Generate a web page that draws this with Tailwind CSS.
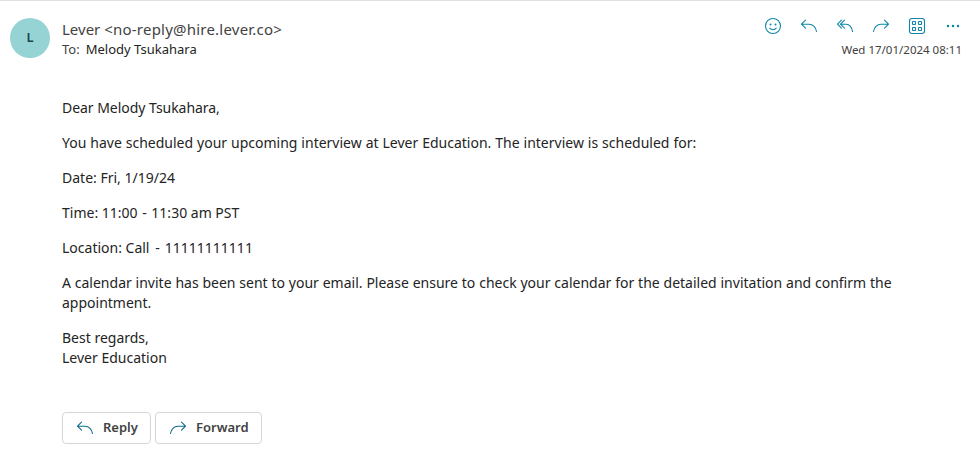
<!DOCTYPE html>
<html lang="en">
<head>
    <meta charset="UTF-8">
    <meta name="viewport" content="width=device-width, initial-scale=1.0">
    <title>Interview scheduled</title>
    <script src="https://cdn.jsdelivr.net/npm/@tailwindcss/browser@4"></script>
</head>
<body class="bg-white font-['Noto_Sans',sans-serif] text-[#242424]">
    <div class="h-[455px] overflow-hidden border-t border-[#e0e0e0]">
        <!-- Message header -->
        <header class="flex pl-[10px] pr-[18px] pt-[17px]">
            <div class="w-10 h-10 shrink-0 rounded-full bg-[#96d3d4] text-[#15474b] text-[13px] font-semibold flex items-center justify-center">L</div>
            <div class="ml-3 pt-[1px] flex-1 whitespace-nowrap">
                <div class="text-[15px] leading-5 text-[#424242]">Lever <span class="tracking-[0.22px]">&lt;no-reply@hire.lever.co&gt;</span></div>
                <div class="text-[13px] leading-5 flex gap-[7px]"><span class="text-[#424242] -mr-px">To:</span><span>Melody Tsukahara</span></div>
            </div>
            <div class="flex flex-col items-end">
                <div class="flex gap-4 text-[#0f86a8] -mt-[2px] -mr-px">
                    <svg class="w-5 h-5" viewBox="0 0 20 20" fill="none" stroke="currentColor" stroke-width="1.1" stroke-linecap="round"><circle cx="10" cy="10" r="7.5"/><path d="M6.8 12.2c1.6 2 4.8 2 6.4 0"/><circle cx="7.5" cy="8.5" r="1" fill="currentColor" stroke="none"/><circle cx="12.5" cy="8.5" r="1" fill="currentColor" stroke="none"/></svg>
                    <svg class="w-5 h-5" viewBox="0 0 20 20" fill="none" stroke="currentColor" stroke-width="1.1" stroke-linecap="round" stroke-linejoin="round"><path d="M6.5 4.2l-4 4 4 4M2.5 8.2H10c4 0 7 3.2 7.5 7.3"/></svg>
                    <svg class="w-5 h-5" viewBox="0 0 20 20" fill="none" stroke="currentColor" stroke-width="1.1" stroke-linecap="round" stroke-linejoin="round"><path d="M6.5 4.2l-4 4 4 4M9.5 4.2l-4 4 4 4M5.5 8.2H11c3.5 0 6.2 3.2 6.5 7.3"/></svg>
                    <svg class="w-5 h-5" viewBox="0 0 20 20" fill="none" stroke="currentColor" stroke-width="1.1" stroke-linecap="round" stroke-linejoin="round"><path d="M13.5 4.2l4 4-4 4M17.5 8.2H10c-4 0-7 3.2-7.5 7.3"/></svg>
                    <svg class="w-5 h-5" viewBox="0 0 20 20" fill="none" stroke="currentColor" stroke-width="1.1"><rect x="2.5" y="2.5" width="15" height="15" rx="2.5"/><rect x="5.5" y="5.5" width="3" height="3" rx=".5"/><rect x="11.5" y="5.5" width="3" height="3" rx=".5"/><rect x="5.5" y="11.5" width="3" height="3" rx=".5"/><rect x="11.5" y="11.5" width="3" height="3" rx=".5"/></svg>
                    <svg class="w-5 h-5" viewBox="0 0 20 20" fill="currentColor"><circle cx="5" cy="10" r="1.25"/><circle cx="10" cy="10" r="1.25"/><circle cx="15" cy="10" r="1.25"/></svg>
                </div>
                <div class="mt-[6px] text-[11.5px] leading-4 text-[#424242] whitespace-nowrap">Wed 17/01/2024 08:11</div>
            </div>
        </header>

        <!-- Message body -->
        <main class="ml-[62px] mt-[39px] text-[14px] leading-5 space-y-[15px] whitespace-nowrap">
            <p class="tracking-[-0.04px]">Dear Melody Tsukahara,</p>
            <p class="[word-spacing:0.3px]">You have scheduled your upcoming interview at Lever Education. The interview is scheduled for:</p>
            <p>Date: Fri, 1/19/24</p>
            <p>Time: 11:00 <span class="mx-px">-</span> 11:30 am PST</p>
            <p>Location: Call <span class="ml-[2px] mr-[1.5px]">-</span> 11111111111</p>
            <p class="[word-spacing:0.2px]">A calendar invite has been sent to your email. Please ensure to check your calendar for the detailed invitation and confirm the<br>appointment.</p>
            <p>Best regards,<br>Lever Education</p>
        </main>

        <!-- Reply actions -->
        <div class="ml-[62px] mt-11 flex gap-1 text-[13px] font-semibold text-[#424242]">
            <button class="w-[89px] h-8 pl-3 flex items-center rounded border border-[#d6d6d6]">
                <svg class="w-5 h-5 mr-2 text-[#0f6c8c]" viewBox="0 0 20 20" fill="none" stroke="currentColor" stroke-width="1.1" stroke-linecap="round" stroke-linejoin="round"><path d="M6.5 4.2l-4 4 4 4M2.5 8.2H10c4 0 7 3.2 7.5 7.3"/></svg>
                <span>Reply</span>
            </button>
            <button class="w-[107px] h-8 pl-3 flex items-center rounded border border-[#d6d6d6]">
                <svg class="w-5 h-5 mr-2 text-[#0f6c8c]" viewBox="0 0 20 20" fill="none" stroke="currentColor" stroke-width="1.1" stroke-linecap="round" stroke-linejoin="round"><path d="M13.5 4.2l4 4-4 4M17.5 8.2H10c-4 0-7 3.2-7.5 7.3"/></svg>
                <span>Forward</span>
            </button>
        </div>
    </div>
</body>
</html>
